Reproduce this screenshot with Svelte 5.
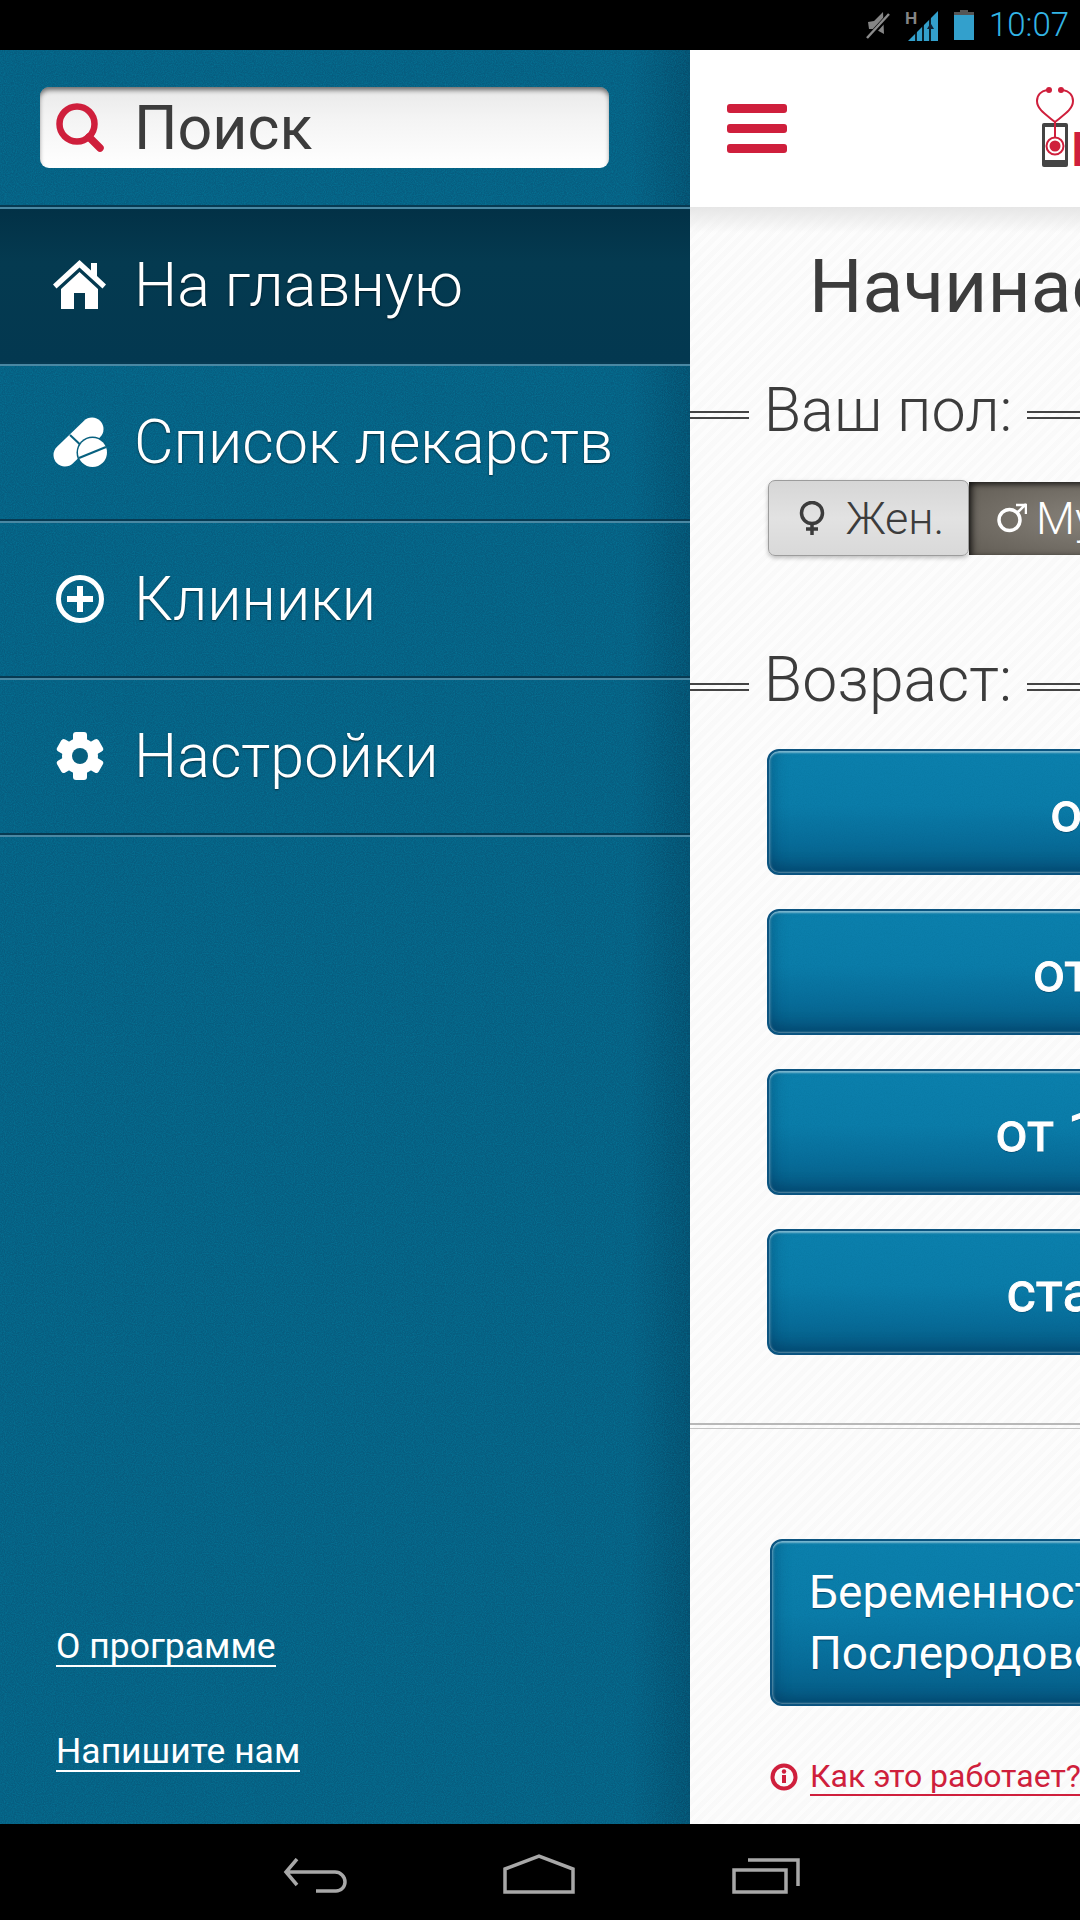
<script>
  const navItems = [
    { label: 'На главную', icon: 'home', active: true },
    { label: 'Список лекарств', icon: 'pills' },
    { label: 'Клиники', icon: 'plus' },
    { label: 'Настройки', icon: 'gear' }
  ];
  const ages = ['от 0 до 1 года', 'от 10 до 18 лет', 'от 18-ти до 65 лет', 'старше 65-ти лет'];
</script>

<div class="screen">
  <header class="status">
    <svg class="st-mute" viewBox="0 0 24 28" width="24" height="28">
      <path d="M2 11l6-1 9-9 1 22-9-5H3z" fill="#858585" />
      <path d="M1 28 24 3" stroke="#000" stroke-width="5" fill="none" />
      <path d="M1 27 23 3" stroke="#8c8c8c" stroke-width="2.5" fill="none" />
    </svg>
    <svg class="st-signal" viewBox="0 0 34 32" width="34" height="32">
      <path d="M3 31 33 1v30z" fill="#33a0cc" />
      <path d="M11 31V22M18 31V15M25 31V8" stroke="#000" stroke-width="1.6" />
      <path d="M22 19l3.500-6 3.500 6z" fill="#123" />
      <rect x="-1" y="0" width="15" height="15" fill="#000" />
      <text x="0" y="14" class="st-h">H</text>
    </svg>
    <svg class="st-batt" viewBox="0 0 20 30" width="20" height="30">
      <path d="M6 0h8v2H6z" fill="#555" />
      <path d="M0 2h20v3H0z" fill="#555" />
      <path d="M0 5h20v25H0z" fill="#33a0cc" />
    </svg>
    <span class="clock">10:07</span>
  </header>

  <div class="middle">
    <aside class="drawer">
      <div class="search-wrap">
        <div class="search">
          <svg viewBox="0 0 49 49" width="49" height="49">
            <circle cx="21" cy="21" r="17.500" fill="none" stroke="#cf1f3c" stroke-width="6.500" />
            <path d="M33 34l11 11" stroke="#cf1f3c" stroke-width="7.500" stroke-linecap="round" />
          </svg>
          <span>Поиск</span>
        </div>
      </div>

      <nav>
        <div class="sep"></div>
        {#each navItems as item}
          <a class="item" class:active={item.active}>
            <span class="ico">
              {#if item.icon === 'home'}
                <svg viewBox="0 0 53 49" width="53" height="49">
                  <path fill="#fff" d="M26.500 0 38 10.500V3h6v13l9 8.500-3.500 4L26.500 7.500 3.500 28.500 0 24.500z" />
                  <path fill="#fff" d="M26.500 12 45 29v20H32V33H21v16H8V29z" />
                </svg>
              {:else if item.icon === 'pills'}
                <svg viewBox="0 0 54 50" width="54" height="50">
                  <path d="M12 38 39 12" stroke="#fff" stroke-width="23" stroke-linecap="round" />
                  <path d="M17 18l17 16" stroke="#07607f" stroke-width="2" />
                  <circle cx="39.500" cy="35.500" r="16" fill="#07607f" />
                  <circle cx="39.500" cy="35.500" r="14.500" fill="#fff" />
                  <path d="M26 41l27-11" stroke="#07607f" stroke-width="2.200" />
                </svg>
              {:else if item.icon === 'plus'}
                <svg viewBox="0 0 48 48" width="48" height="48">
                  <circle cx="24" cy="24" r="21.500" fill="none" stroke="#fff" stroke-width="5" />
                  <path d="M24 11v26M11 24h26" stroke="#fff" stroke-width="6" />
                </svg>
              {:else}
                <svg viewBox="0 0 48 48" width="48" height="48">
                  <g fill="#fff">
                    <rect x="17" y="0" width="14" height="48" rx="3" />
                    <rect x="17" y="0" width="14" height="48" rx="3" transform="rotate(60 24 24)" />
                    <rect x="17" y="0" width="14" height="48" rx="3" transform="rotate(120 24 24)" />
                    <circle cx="24" cy="24" r="18" />
                  </g>
                  <circle cx="24" cy="24" r="8" fill="#07607f" />
                </svg>
              {/if}
            </span>
            <span class="label">{item.label}</span>
          </a>
          <div class="sep"></div>
        {/each}
      </nav>

      <div class="foot">
        <a>О программе</a>
        <a>Напишите нам</a>
      </div>
    </aside>

    <main class="page">
      <div class="topbar">
        <div class="burger"><i></i><i></i><i></i></div>
        <div class="logo">
          <svg viewBox="1036 86 38 82" width="38" height="82">
            <rect x="1042" y="123" width="26" height="44" rx="2" fill="#444" />
            <rect x="1045" y="127" width="20" height="33" fill="#fff" />
            <path d="M1047 90c-6 1-10 5-10 11 0 8 8 13 18 21 10-8 18-13 18-21 0-6-4-10-10-11" fill="none" stroke="#cf1f3c" stroke-width="2" />
            <circle cx="1049" cy="90" r="3" fill="#cf1f3c" />
            <circle cx="1061" cy="90" r="3" fill="#cf1f3c" />
            <path d="M1055 122v15" stroke="#cf1f3c" stroke-width="2" />
            <circle cx="1055" cy="146" r="8.500" fill="#fff" stroke="#cf1f3c" stroke-width="2" />
            <circle cx="1055" cy="146" r="5.500" fill="#cf1f3c" />
          </svg>
          <span class="brand">Н</span>
        </div>
      </div>

      <h1>Начинаем</h1>

      <div class="legend first"><b></b><span>Ваш пол:</span><b class="grow"></b></div>

      <div class="toggle">
        <div class="tg on">
          <svg viewBox="0 0 28 34" width="28" height="34">
            <circle cx="14" cy="12" r="10.500" fill="none" stroke="#3c3c3c" stroke-width="3.500" />
            <path d="M14 22v12M8 28h12" stroke="#3c3c3c" stroke-width="3.500" />
          </svg>
          <span>Жен.</span>
        </div>
        <div class="tg off">
          <svg viewBox="0 0 30 30" width="30" height="30">
            <circle cx="12.500" cy="17" r="10.500" fill="none" stroke="#fff" stroke-width="3.500" />
            <path d="M20 10 29 1M19 2h10v9" fill="none" stroke="#fff" stroke-width="2.500" />
          </svg>
          <span>Муж.</span>
        </div>
      </div>

      <div class="legend second"><b></b><span>Возраст:</span><b class="grow"></b></div>

      <div class="ages">
        {#each ages as age}
          <button class="btn age">{age}</button>
        {/each}
      </div>

      <div class="rule"></div>

      <button class="btn preg">Беременность<br />Послеродовой период</button>

      <div class="how">
        <svg viewBox="0 0 28 28" width="28" height="28">
          <circle cx="14" cy="14" r="11.500" fill="none" stroke="#cf1f3c" stroke-width="4" />
          <path d="M14 12v8" stroke="#cf1f3c" stroke-width="4" />
          <circle cx="14" cy="8.500" r="2.200" fill="#cf1f3c" />
        </svg>
        <a>Как это работает?</a>
      </div>
    </main>
  </div>

  <footer class="navbar">
    <svg viewBox="0 0 68 36" width="68" height="36">
      <path d="M14 1 3 14l11 13M3 14h49a10 10 0 0 1 10 10v0a9 9 0 0 1-9 9H33" fill="none" stroke="#a8a8a8" stroke-width="3.500" />
    </svg>
    <svg class="nb-home" viewBox="0 0 72 40" width="72" height="40">
      <path d="M2 15 36 2l34 13v23H2z" fill="none" stroke="#a8a8a8" stroke-width="3.500" />
    </svg>
    <svg viewBox="0 0 68 36" width="68" height="36">
      <path d="M16 2h50v26" fill="none" stroke="#a8a8a8" stroke-width="3.500" />
      <path d="M2 12h52v22H2z" fill="none" stroke="#a8a8a8" stroke-width="3.500" />
    </svg>
  </footer>
</div>

<style>
  :global(body) {
    margin: 0;
    overflow: hidden;
    background: #000;
  }
  .screen {
    width: 1080px;
    height: 1920px;
    display: flex;
    flex-direction: column;
    overflow: hidden;
    font-family: Roboto, "Noto Sans", sans-serif;
    background: #000;
  }

  /* status bar */
  .status {
    flex: 0 0 50px;
    display: flex;
    align-items: center;
    padding-left: 866px;
    background: #000;
  }
  .st-mute { margin-top: -1px; }
  .st-signal { margin-left: 15px; margin-top: 2px; }
  .st-h { font: 700 17px "Liberation Sans", sans-serif; fill: #858585; }
  .st-batt { margin-left: 15px; }
  .clock {
    margin-left: 15px;
    font-size: 33px;
    line-height: 50px;
    color: #33b5e5;
    font-weight: 300;
    white-space: nowrap;
  }

  .middle {
    flex: 0 0 1774px;
    display: flex;
    overflow: hidden;
  }

  /* drawer */
  .drawer {
    flex: 0 0 690px;
    display: flex;
    flex-direction: column;
    color: #fff;
    background-color: #065d80;
    background-image:
      url("data:image/svg+xml,%3Csvg xmlns='http://www.w3.org/2000/svg' width='300' height='300'%3E%3Cfilter id='n'%3E%3CfeTurbulence type='fractalNoise' baseFrequency='.9' numOctaves='2' stitchTiles='stitch'/%3E%3CfeColorMatrix values='0 0 0 0 0 0 0 0 0 .42 0 0 0 0 .62 0 0 0 1.4 -.45'/%3E%3C/filter%3E%3Crect width='300' height='300' filter='url(%23n)' opacity='.3'/%3E%3C/svg%3E"),
      linear-gradient(to left, rgba(0, 20, 40, 0.22), rgba(0, 20, 40, 0) 60px);
  }
  .search-wrap {
    flex: 0 0 155px;
    padding: 37px 81px 0 40px;
    box-sizing: border-box;
  }
  .search {
    height: 81px;
    display: flex;
    align-items: center;
    padding-left: 16px;
    gap: 29px;
    border-radius: 9px;
    background: linear-gradient(#e9e9e9, #f4f4f4 40%, #fff);
    box-shadow: inset 0 4px 5px -1px rgba(0, 0, 0, 0.55);
    font-size: 61px;
    color: #3c3c3c;
  }
  nav { display: flex; flex-direction: column; }
  .sep {
    height: 4px;
    background: linear-gradient(#073a52 50%, #4a88a3 50%);
  }
  .item {
    height: 153px;
    display: flex;
    align-items: center;
    padding-left: 51px;
    gap: 26px;
    font-size: 61px;
    font-weight: 300;
    text-shadow: 0 1px 2px rgba(0, 0, 0, 0.55);
    white-space: nowrap;
  }
  .item.active {
    background: linear-gradient(#023146, #043a50 35%, #033850);
  }
  .ico {
    flex: 0 0 57px;
    display: flex;
    justify-content: center;
    margin-top: -2px;
  }
  .label { margin-top: -2px; }
  .foot {
    margin-top: auto;
    padding: 0 0 52px 56px;
    display: flex;
    flex-direction: column;
    align-items: flex-start;
    gap: 65px;
    font-size: 35.5px;
  }
  .foot a { border-bottom: 2px solid #fff; line-height: 39px; height: 38px; }

  /* page */
  .page {
    flex: 0 0 1080px;
    display: flex;
    flex-direction: column;
    align-items: flex-start;
    background-color: #fafafa;
    background-image:
      linear-gradient(#e6e6e6, rgba(249, 249, 249, 0) 26px),
      repeating-linear-gradient(135deg, rgba(255, 255, 255, 0.5) 0 4px, rgba(248, 248, 248, 0.3) 4px 9px);
    background-position: 0 157px, 0 0;
    background-repeat: no-repeat, repeat;
    color: #3c3c3c;
  }
  .topbar {
    align-self: stretch;
    flex: 0 0 157px;
    background: #fff;
    display: flex;
    align-items: flex-start;
  }
  .burger {
    margin: 54px 0 0 37px;
    width: 60px;
    display: flex;
    flex-direction: column;
    gap: 11px;
  }
  .burger i {
    display: block;
    height: 9px;
    border-radius: 3px;
    background: #cf1f3c;
  }
  .logo {
    margin: 36px 0 0 249px;
    display: flex;
    align-items: flex-end;
    height: 82px;
    white-space: nowrap;
  }
  .brand {
    font-size: 48px;
    line-height: 42px;
    font-weight: 500;
    color: #cf1f3c;
    margin: 0 0 -3px -3px;
  }
  h1 {
    margin: 34px 0 0 119px;
    font-size: 75px;
    line-height: 90px;
    font-weight: 400;
    white-space: nowrap;
  }
  .legend {
    align-self: stretch;
    display: flex;
    align-items: center;
    height: 70px;
    font-size: 61px;
    font-weight: 300;
    line-height: 70px;
  }
  .legend.first { margin-top: 45px; }
  .legend.second { margin-top: 92px; }
  .legend span {
    flex: 0 0 278px;
    text-align: center;
    white-space: nowrap;
    margin-top: -2px;
  }
  .legend.second span {
    font-size: 62.500px;
    margin-top: -6px;
  }
  .legend b {
    flex: 0 0 59px;
    height: 2px;
    margin-top: 8px;
    border-top: 2px solid #444;
    border-bottom: 2px solid #444;
    padding-top: 2px;
    box-sizing: content-box;
  }
  .legend b.grow { flex: 1; }

  .toggle {
    margin: 34px 0 0 78px;
    display: flex;
    align-items: center;
    font-size: 45px;
    font-weight: 300;
  }
  .tg {
    display: flex;
    align-items: center;
    box-sizing: border-box;
    white-space: nowrap;
  }
  .tg.on {
    width: 201px;
    height: 76px;
    padding-left: 29px;
    gap: 20px;
    border: 1px solid #9c9c9c;
    border-radius: 7px;
    background: linear-gradient(#d6d6d6, #e2e2e2 50%, #d9d9d9);
    box-shadow: 0 2px 4px rgba(0, 0, 0, 0.25);
    position: relative;
    z-index: 1;
  }
  .tg.off {
    width: 260px;
    height: 73px;
    padding-left: 28px;
    gap: 9px;
    color: #fff;
    background: radial-gradient(ellipse at 50% 50%, #88837b, #625d55);
    box-shadow: inset 0 3px 5px rgba(0, 0, 0, 0.55), inset 6px 0 6px -2px rgba(0, 0, 0, 0.5);
  }

  .btn {
    display: block;
    border: 2px solid #0b5480;
    border-radius: 12px;
    padding: 0;
    color: #fff;
    font-family: inherit;
    background-color: #0a7ba8;
    background-image:
      url("data:image/svg+xml,%3Csvg xmlns='http://www.w3.org/2000/svg' width='200' height='200'%3E%3Cfilter id='n'%3E%3CfeTurbulence type='fractalNoise' baseFrequency='.9' numOctaves='2'/%3E%3CfeColorMatrix values='0 0 0 0 0 0 0 0 0 .1 0 0 0 0 .2 0 0 0 .9 -.3'/%3E%3C/filter%3E%3Crect width='200' height='200' filter='url(%23n)' opacity='.25'/%3E%3C/svg%3E"),
      linear-gradient(#0b80ad, #0a7ca9 45%, #076c99 75%, #055a83);
    box-shadow:
      inset 0 3px 2px -1px rgba(255, 255, 255, 0.45),
      inset 0 -2px 2px -1px rgba(255, 255, 255, 0.35),
      inset 3px 0 3px -2px rgba(255, 255, 255, 0.35),
      inset 0 -12px 12px -4px rgba(0, 50, 90, 0.35),
      inset 14px 0 14px -8px rgba(0, 50, 90, 0.25);
    text-shadow: 0 1px 1px rgba(0, 40, 70, 0.7);
    white-space: nowrap;
  }
  .ages {
    margin: 31px 0 0 77px;
    display: flex;
    flex-direction: column;
    gap: 34px;
  }
  .age {
    width: 926px;
    height: 126px;
    font-size: 56px;
    font-weight: 400;
    -webkit-text-stroke: 1px #fff;
    text-align: center;
  }
  .rule {
    align-self: stretch;
    margin-top: 68px;
    height: 3px;
    border-top: 2px solid #b8b8b8;
    border-bottom: 1px solid #c4c4c4;
  }
  .preg {
    margin: 110px 0 0 80px;
    width: 920px;
    height: 167px;
    padding-left: 37px;
    text-align: left;
    font-size: 46px;
    line-height: 61px;
    font-weight: 400;
    text-shadow: 0 1px 1px rgba(0, 40, 70, 0.6);
  }
  .how {
    margin: 52px 0 0 80px;
    display: flex;
    align-items: center;
    gap: 12px;
    font-size: 32px;
    line-height: 36px;
    color: #cf1f3c;
    white-space: nowrap;
  }
  .how a { border-bottom: 2px solid #cf1f3c; height: 36px; }

  /* nav bar */
  .navbar {
    flex: 0 0 96px;
    background: #000;
    display: flex;
    align-items: flex-start;
    padding: 34px 0 0 283px;
    box-sizing: border-box;
    gap: 155px;
  }
  .nb-home { margin: -4px 2px 0 -3px; }
</style>
